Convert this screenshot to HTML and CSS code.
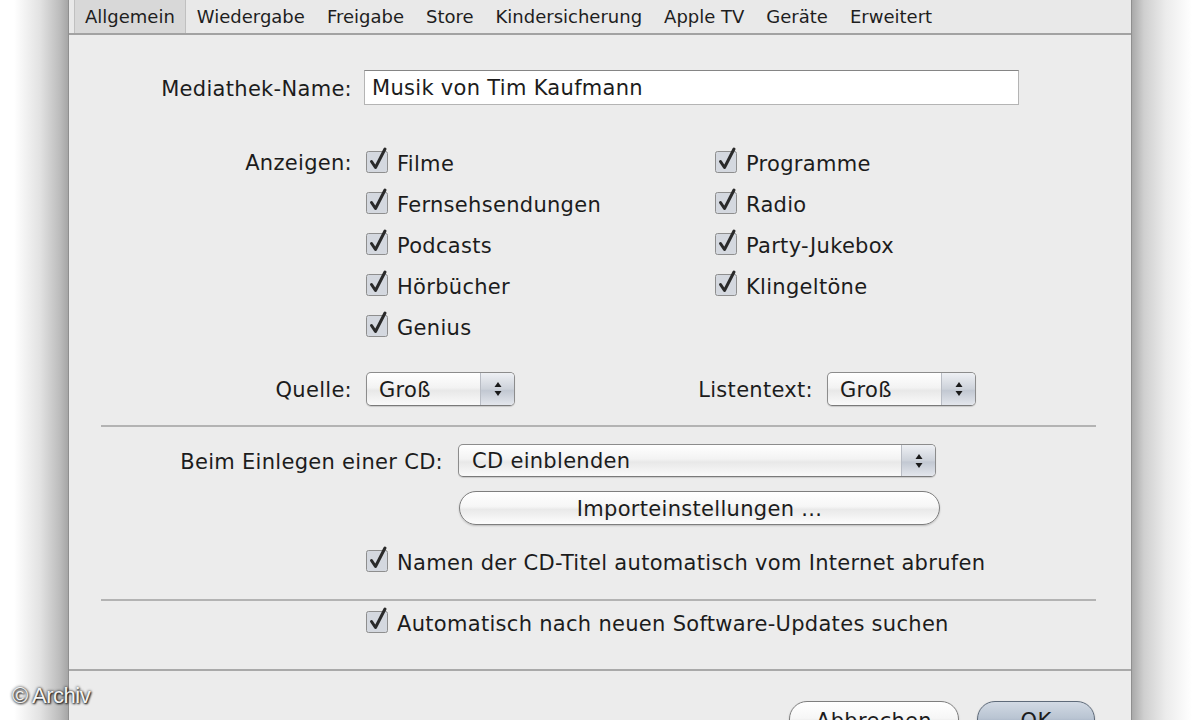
FILE: index.html
```html
<!DOCTYPE html>
<html lang="de">
<head>
    <meta charset="UTF-8">
    <title>Einstellungen: Allgemein</title>
    <link rel="stylesheet" href="styles.css">
</head>
<body>

<div class="screen">
    <div class="shade shade-left"></div>

    <div class="window">
        <nav class="tabs">
            <span class="tab active">Allgemein</span>
            <span class="tab">Wiedergabe</span>
            <span class="tab">Freigabe</span>
            <span class="tab">Store</span>
            <span class="tab">Kindersicherung</span>
            <span class="tab">Apple TV</span>
            <span class="tab">Geräte</span>
            <span class="tab">Erweitert</span>
        </nav>

        <main class="content">
            <div class="row row-name">
                <span class="label">Mediathek-Name:</span>
                <div class="textfield">Musik von Tim Kaufmann</div>
            </div>

            <div class="row row-show">
                <span class="label">Anzeigen:</span>
                <div class="check-grid">
                    <div class="check"><svg class="box" viewBox="0 0 24 28"><rect x="0.5" y="5.5" width="21" height="21" rx="2"/><path d="M5.5 15.5 L9.5 21.5 L19 3"/></svg>Filme</div>
                    <div class="check"><svg class="box" viewBox="0 0 24 28"><rect x="0.5" y="5.5" width="21" height="21" rx="2"/><path d="M5.5 15.5 L9.5 21.5 L19 3"/></svg>Programme</div>
                    <div class="check"><svg class="box" viewBox="0 0 24 28"><rect x="0.5" y="5.5" width="21" height="21" rx="2"/><path d="M5.5 15.5 L9.5 21.5 L19 3"/></svg>Fernsehsendungen</div>
                    <div class="check"><svg class="box" viewBox="0 0 24 28"><rect x="0.5" y="5.5" width="21" height="21" rx="2"/><path d="M5.5 15.5 L9.5 21.5 L19 3"/></svg>Radio</div>
                    <div class="check"><svg class="box" viewBox="0 0 24 28"><rect x="0.5" y="5.5" width="21" height="21" rx="2"/><path d="M5.5 15.5 L9.5 21.5 L19 3"/></svg>Podcasts</div>
                    <div class="check"><svg class="box" viewBox="0 0 24 28"><rect x="0.5" y="5.5" width="21" height="21" rx="2"/><path d="M5.5 15.5 L9.5 21.5 L19 3"/></svg>Party-Jukebox</div>
                    <div class="check"><svg class="box" viewBox="0 0 24 28"><rect x="0.5" y="5.5" width="21" height="21" rx="2"/><path d="M5.5 15.5 L9.5 21.5 L19 3"/></svg>Hörbücher</div>
                    <div class="check"><svg class="box" viewBox="0 0 24 28"><rect x="0.5" y="5.5" width="21" height="21" rx="2"/><path d="M5.5 15.5 L9.5 21.5 L19 3"/></svg>Klingeltöne</div>
                    <div class="check"><svg class="box" viewBox="0 0 24 28"><rect x="0.5" y="5.5" width="21" height="21" rx="2"/><path d="M5.5 15.5 L9.5 21.5 L19 3"/></svg>Genius</div>
                </div>
            </div>

            <div class="row row-size">
                <span class="label">Quelle:</span>
                <div class="popup popup-small">
                    <span class="popup-text">Groß</span>
                    <span class="popup-arrows"><svg viewBox="0 0 10 18"><path d="M1.5 7 L5 2 L8.5 7 Z"/><path d="M1.5 11 L5 16 L8.5 11 Z"/></svg></span>
                </div>
                <span class="label label-list">Listentext:</span>
                <div class="popup popup-small">
                    <span class="popup-text">Groß</span>
                    <span class="popup-arrows"><svg viewBox="0 0 10 18"><path d="M1.5 7 L5 2 L8.5 7 Z"/><path d="M1.5 11 L5 16 L8.5 11 Z"/></svg></span>
                </div>
            </div>

            <hr class="sep sep-first">

            <div class="row row-cd">
                <span class="label label-cd">Beim Einlegen einer CD:</span>
                <div class="popup popup-wide">
                    <span class="popup-text">CD einblenden</span>
                    <span class="popup-arrows"><svg viewBox="0 0 10 18"><path d="M1.5 7 L5 2 L8.5 7 Z"/><path d="M1.5 11 L5 16 L8.5 11 Z"/></svg></span>
                </div>
            </div>

            <button class="btn btn-import">Importeinstellungen ...</button>

            <div class="check check-single check-cdnames"><svg class="box" viewBox="0 0 24 28"><rect x="0.5" y="5.5" width="21" height="21" rx="2"/><path d="M5.5 15.5 L9.5 21.5 L19 3"/></svg>Namen der CD-Titel automatisch vom Internet abrufen</div>

            <hr class="sep sep-second">

            <div class="check check-single check-updates"><svg class="box" viewBox="0 0 24 28"><rect x="0.5" y="5.5" width="21" height="21" rx="2"/><path d="M5.5 15.5 L9.5 21.5 L19 3"/></svg>Automatisch nach neuen Software-Updates suchen</div>
        </main>

        <footer class="footer">
            <button class="btn btn-cancel">Abbrechen</button>
            <button class="btn btn-ok">OK</button>
        </footer>
    </div>

    <div class="shade shade-right"></div>
</div>

<div class="watermark">© Archiv</div>

</body>
</html>
```

FILE: styles.css
```css
 html, body {
     margin: 0;
     height: 720px;
     overflow: hidden;
 }

 body {
     font-family: "DejaVu Sans", "Liberation Sans", sans-serif;
     color: #1c1c1c;
     background-color: #fff;
     position: relative;
 }

 .screen {
     display: flex;
     height: 720px;
 }

 /* Window shadow left and right */
 .shade {
     width: 68px;
     flex-shrink: 0;
 }

 .shade-left {
     background: linear-gradient(to right, #fff 0, #fff 14px, #e2e2e2 40px, #bcbcbc 60px, #a6a6a6 68px);
 }

 .shade-right {
     background: linear-gradient(to right, #a9a9a9 0, #cfcfcf 12px, #ececec 34px, #fff 60px);
 }

 .window {
     width: 1064px;
     box-sizing: border-box;
     border-left: 1px solid #8f8f8f;
     border-right: 1px solid #8f8f8f;
     background-color: #ececec;
     display: flex;
     flex-direction: column;
 }

 /* Toolbar tabs */
 .tabs {
     display: flex;
     height: 33px;
     padding-left: 5px;
     border-bottom: 2px solid #a2a2a2;
     background-color: #e9e9e9;
 }

 .tab {
     font-size: 18px;
     line-height: 33px;
     padding: 0 10px;
     border-left: 1px solid transparent;
     border-right: 1px solid transparent;
     color: #1e1e1e;
 }

 .tab.active {
     background-color: #d8d8d8;
     border-left-color: #c0c0c0;
     border-right-color: #c0c0c0;
 }

 /* Form */
 .content {
     display: flex;
     flex-direction: column;
     font-size: 21px;
     letter-spacing: 0.3px;
 }

 .row {
     display: flex;
     align-items: center;
 }

 .label {
     width: 283px;
     flex-shrink: 0;
     text-align: right;
     margin-right: 14px;
     white-space: nowrap;
 }

 .row-name {
     margin-top: 35px;
 }

 .row-name .label {
     margin-right: 12px;
     padding-top: 2px;
 }

 .textfield {
     width: 655px;
     height: 35px;
     box-sizing: border-box;
     background-color: #fff;
     border: 1px solid #b4b4b4;
     border-top-color: #858585;
     padding-left: 7px;
     line-height: 35px;
 }

 .row-show {
     align-items: flex-start;
     margin-top: 37px;
 }

 .row-show .label {
     line-height: 43px;
 }

 .check-grid {
     display: grid;
     grid-template-columns: 349px auto;
     grid-auto-rows: 41px;
 }

 .check {
     display: flex;
     align-items: center;
     white-space: nowrap;
     padding-top: 2px;
 }

 .box {
     width: 24px;
     height: 28px;
     margin-top: -8px;
     margin-right: 7px;
     flex-shrink: 0;
     overflow: visible;
 }

 .box rect {
     fill: #d4d8df;
     stroke: #8e8e8e;
     stroke-width: 1;
 }

 .box path {
     fill: none;
     stroke: #2a2a2a;
     stroke-width: 3;
     stroke-linecap: round;
     stroke-linejoin: round;
 }

 .row-size {
     margin-top: 25px;
 }

 .row-size .label {
     padding-top: 2px;
 }

 .label-list {
     width: 298px;
 }

 /* Popup buttons */
 .popup {
     display: flex;
     box-sizing: border-box;
     height: 34px;
     border: 1px solid #8c8c8c;
     border-bottom-color: #7a7a7a;
     border-radius: 5px;
     background: linear-gradient(#ffffff, #f3f3f3 45%, #e8e8e8 55%, #fafafa);
     box-shadow: 0 1px 1px rgba(0, 0, 0, 0.15);
     overflow: hidden;
 }

 .popup-small {
     width: 149px;
 }

 .popup-wide {
     width: 478px;
     height: 33px;
 }

 .popup-text {
     flex: 1;
     padding-left: 12px;
     line-height: 34px;
 }

 .popup-wide .popup-text {
     padding-left: 13px;
     line-height: 33px;
 }

 .popup-arrows {
     width: 33px;
     display: flex;
     align-items: center;
     justify-content: center;
     border-left: 1px solid #b8bcc4;
     background: linear-gradient(#eef0f4, #cdd2da 50%, #c2c8d2 55%, #e3e6ec);
 }

 .popup-arrows svg {
     width: 10px;
     height: 18px;
 }

 .popup-arrows path {
     fill: #1a1a1a;
 }

 .sep {
     border: none;
     height: 2px;
     background-color: #b3b3b3;
     margin: 0 35px 0 32px;
 }

 .sep-first {
     margin-top: 19px;
 }

 .row-cd {
     margin-top: 17px;
 }

 .row-cd .label {
     padding-top: 2px;
 }

 .label-cd {
     width: 374px;
     margin-right: 15px;
 }

 /* Push buttons */
 .btn {
     font-family: inherit;
     font-size: 21px;
     letter-spacing: 0.3px;
     color: #1c1c1c;
     box-sizing: border-box;
     border: 1px solid #7e7e7e;
     border-radius: 18px;
     background: linear-gradient(#ffffff, #f6f6f6 45%, #e9e9e9 55%, #fdfdfd);
     box-shadow: 0 1px 2px rgba(0, 0, 0, 0.2);
     padding: 2px 0 0;
 }

 .btn-import {
     align-self: flex-start;
     margin-left: 390px;
     margin-top: 14px;
     width: 481px;
     height: 34px;
 }

 .check-single {
     padding-left: 297px;
     height: 30px;
 }

 .check-cdnames {
     margin-top: 21px;
 }

 .sep-second {
     margin-top: 21px;
 }

 .check-updates {
     margin-top: 6px;
 }

 /* Footer with dialog buttons */
 .footer {
     margin-top: 30px;
     border-top: 2px solid #a9a9a9;
     display: flex;
     justify-content: flex-end;
     gap: 18px;
     padding: 30px 36px 0 0;
 }

 .btn-cancel {
     width: 170px;
     height: 38px;
 }

 .btn-ok {
     width: 118px;
     height: 38px;
     border-color: #5f6b7a;
     background: linear-gradient(#d2dae4, #b9c4d2 45%, #a8b5c6 55%, #c9d3df);
 }

 .watermark {
     position: absolute;
     left: 12px;
     top: 683px;
     font-family: "Liberation Sans", Arial, sans-serif;
     font-size: 22px;
     color: #f4f4f4;
     text-shadow: 0 0 3px #000, 1px 1px 2px #222;
     letter-spacing: -0.5px;
 }
```
